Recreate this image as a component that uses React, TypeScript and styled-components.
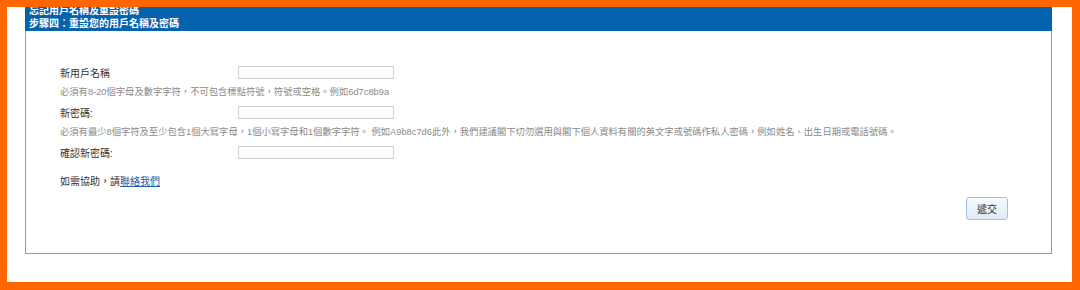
import React from "react";
import styled, { createGlobalStyle } from "styled-components";

const GlobalStyle = createGlobalStyle`
  html, body { margin: 0; padding: 0; background: #ffffff; }
  body { font-family: "Liberation Sans", "Noto Sans CJK TC", sans-serif; }
`;

const Frame = styled.div`
  box-sizing: border-box;
  width: 1080px;
  height: 290px;
  border-style: solid;
  border-color: #ff6600;
  border-width: 7px 8px 8px 7px;
  background: #ffffff;
  overflow: hidden;
  padding: 0 20px 0 18px;
`;

const Panel = styled.div`
  margin-top: -4px;
  border: 1px solid #7f9fc3;
  border-top: none;
  height: 251px;
  box-sizing: border-box;
  display: flex;
  flex-direction: column;
`;

const Header = styled.div`
  background: #0562ad;
  color: #ffffff;
  font-weight: bold;
  font-size: 10px;
  line-height: 13px;
  padding: 1px 4px 1px;
  margin: 0 -1px;
`;

const Body = styled.div`
  padding: 31px 43px 0 34px;
  display: flex;
  flex-direction: column;
`;

const FieldRow = styled.div`
  display: flex;
  align-items: center;
  height: 20px;
`;

const Label = styled.label`
  width: 178px;
  font-size: 10px;
  color: #333333;
`;

const TextInput = styled.input`
  box-sizing: border-box;
  width: 156px;
  height: 13px;
  border: 1px solid #cfcfcf;
  padding: 0;
  margin: 0;
  outline: none;
`;

const Hint = styled.div`
  height: 20px;
  line-height: 20px;
  font-size: 9.3px;
  color: #8a8a8a;
  white-space: nowrap;
`;

const Help = styled.div`
  margin-top: 10px;
  height: 20px;
  line-height: 20px;
  font-size: 10px;
  color: #333333;
`;

const Link = styled.a`
  color: #1d5da6;
  text-decoration: underline;
`;

const Actions = styled.div`
  display: flex;
  justify-content: flex-end;
  margin-top: 5px;
`;

const Submit = styled.button`
  box-sizing: border-box;
  width: 42px;
  height: 23px;
  border: 1px solid #a5c0dc;
  border-radius: 3px;
  background: linear-gradient(#f7fafd, #dfe9f4);
  font-family: "Liberation Sans", "Noto Sans CJK TC", sans-serif;
  font-size: 10px;
  color: #333333;
  padding: 0;
`;

export default function App() {
  return (
    <>
      <GlobalStyle />
      <Frame>
        <Panel>
          <Header>
            <div>忘記用戶名稱及重設密碼</div>
            <div>步驟四：重設您的用戶名稱及密碼</div>
          </Header>
          <Body>
            <FieldRow>
              <Label>新用戶名稱</Label>
              <TextInput type="text" />
            </FieldRow>
            <Hint>必須有8-20個字母及數字字符，不可包含標點符號，符號或空格。例如6d7c8b9a</Hint>
            <FieldRow>
              <Label>新密碼:</Label>
              <TextInput type="password" />
            </FieldRow>
            <Hint>
              必須有最少8個字符及至少包含1個大寫字母，1個小寫字母和1個數字字符。 例如A9b8c7d6此外，我們建議閣下切勿選用與閣下個人資料有關的英文字或號碼作私人密碼，例如姓名、出生日期或電話號碼。
            </Hint>
            <FieldRow>
              <Label>確認新密碼:</Label>
              <TextInput type="password" />
            </FieldRow>
            <Help>
              如需協助，請<Link href="#">聯絡我們</Link>
            </Help>
            <Actions>
              <Submit type="button">遞交</Submit>
            </Actions>
          </Body>
        </Panel>
      </Frame>
    </>
  );
}
